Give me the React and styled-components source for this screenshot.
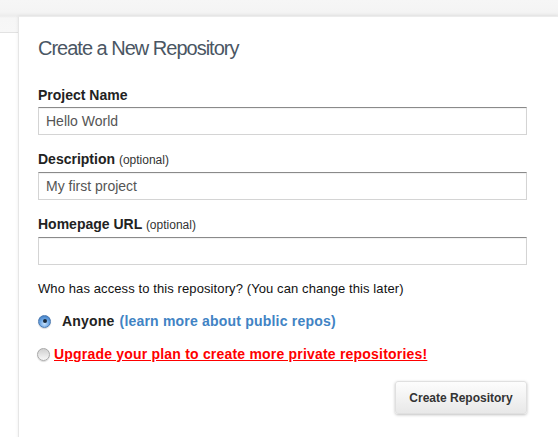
import React from "react";
import styled, { createGlobalStyle } from "styled-components";

const GlobalStyle = createGlobalStyle`
  html, body {
    margin: 0;
    padding: 0;
    background: #fff;
    font-family: "Liberation Sans", Helvetica, Arial, sans-serif;
    overflow: hidden;
  }
`;

function App() {
  return (
    <Page>
      <GlobalStyle />
      <TopBand />
      <Card>
        <Title>Create a New Repository</Title>
        <Form>
          <Field>
            <Label>Project Name</Label>
            <Input defaultValue="Hello World" />
          </Field>
          <Field>
            <Label>
              Description <Optional>(optional)</Optional>
            </Label>
            <Input defaultValue="My first project" />
          </Field>
          <Field>
            <Label>
              Homepage URL <Optional>(optional)</Optional>
            </Label>
            <Input defaultValue="" />
          </Field>

          <Question>Who has access to this repository? (You can change this later)</Question>

          <RadioRow>
            <Radio $checked />
            <Anyone>Anyone</Anyone>
            <BlueLink href="#">(learn more about public repos)</BlueLink>
          </RadioRow>
          <RadioRow>
            <Radio $tight />
            <RedLink href="#">Upgrade your plan to create more private repositories!</RedLink>
          </RadioRow>

          <Actions>
            <Button type="button">Create Repository</Button>
          </Actions>
        </Form>
      </Card>
    </Page>
  );
}

const Page = styled.div`
  width: 558px;
  height: 437px;
  overflow: hidden;
`;

const TopBand = styled.div`
  height: 32px;
  background: linear-gradient(to bottom, #f6f6f6 0px, #f4f4f4 12px, #ececec 16px, #f6f6f6 18px, #f7f7f7 32px);
  border-bottom: 1px solid #e2e2e2;
`;

const Card = styled.div`
  margin: -17px 0 0 18px;
  background: #fff;
  border-left: 1px solid #e6e6e6;
  border-top: 1px solid #ececec;
  box-shadow: 0 0 3px rgba(0, 0, 0, 0.08);
  padding: 19px 0 30px 19px;
`;

const Title = styled.h1`
  margin: 0 0 26px 0;
  font-size: 20px;
  line-height: 24px;
  font-weight: normal;
  color: #4a5663;
  letter-spacing: -1px;
`;

const Form = styled.form`
  width: 489px;
  margin: 0;
`;

const Field = styled.div`
  margin-bottom: 15px;
`;

const Label = styled.label`
  display: block;
  font-size: 14px;
  line-height: 18px;
  font-weight: bold;
  color: #222;
  margin-bottom: 3px;
`;

const Optional = styled.span`
  font-size: 12px;
  font-weight: normal;
  color: #333;
`;

const Input = styled.input`
  display: block;
  box-sizing: border-box;
  width: 489px;
  height: 28px;
  margin: 0;
  padding: 0 7px;
  font-family: "Liberation Sans", Helvetica, Arial, sans-serif;
  font-size: 14px;
  color: #555;
  background: #fff;
  border: 1px solid #d4d4d4;
  border-top-color: #8a8a8a;
  border-radius: 0;
  outline: none;
  box-shadow: inset 0 1px 1px rgba(0, 0, 0, 0.06);
`;

const Question = styled.p`
  margin: 0;
  font-size: 13px;
  line-height: 18px;
  color: #111;
  letter-spacing: 0.1px;
`;

const RadioRow = styled.div`
  display: flex;
  align-items: center;
  height: 20px;
  margin-top: 13px;
  font-size: 14px;
  font-weight: bold;
  letter-spacing: 0.2px;
`;

const Radio = styled.span`
  box-sizing: border-box;
  width: 13px;
  height: 13px;
  border-radius: 50%;
  flex: none;
  margin-left: ${(p) => (p.$tight ? "-1px" : "0")};
  margin-right: ${(p) => (p.$tight ? "4px" : "11px")};
  position: relative;
  border: 1px solid ${(p) => (p.$checked ? "#4a78b0" : "#a8a8a8")};
  background: ${(p) =>
    p.$checked
      ? "radial-gradient(circle at 50% 70%, #c8e2fb 0%, #6fa8e6 45%, #2f6fb8 100%)"
      : "linear-gradient(to bottom, #d0d0d0, #f8f8f8)"};
  box-shadow: 0 1px 1px rgba(0, 0, 0, 0.15);

  &::after {
    content: "";
    display: ${(p) => (p.$checked ? "block" : "none")};
    position: absolute;
    left: 3.5px;
    top: 3.5px;
    width: 4px;
    height: 4px;
    border-radius: 50%;
    background: #1a2a3a;
  }
`;

const Anyone = styled.span`
  color: #222;
  margin-right: 5px;
`;

const BlueLink = styled.a`
  color: #4183c4;
  text-decoration: none;
`;

const RedLink = styled.a`
  color: #f00;
  text-decoration: underline;
`;

const Actions = styled.div`
  display: flex;
  justify-content: flex-end;
  margin-top: 17px;
`;

const Button = styled.button`
  width: 132px;
  height: 33px;
  padding: 0;
  font-family: "Liberation Sans", Helvetica, Arial, sans-serif;
  font-size: 12px;
  font-weight: bold;
  color: #333;
  background: linear-gradient(to bottom, #fdfdfd, #e8e8e8);
  border: 1px solid #e0e0e0;
  border-radius: 3px;
  box-shadow: 0 1px 3px rgba(0, 0, 0, 0.25);
  cursor: pointer;
`;

export default App;
